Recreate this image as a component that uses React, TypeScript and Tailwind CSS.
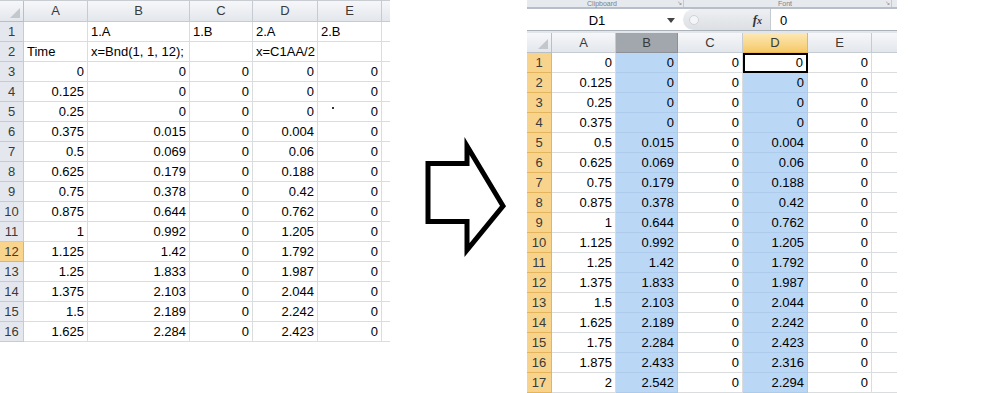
import React from 'react';
import clsx from 'clsx';

const leftCols = ['w-[24px]', 'w-[64px]', 'w-[102px]', 'w-[63px]', 'w-[65px]', 'w-[64px]', 'w-[8px]'];
const rightCols = ['w-[25px]', 'w-[64px]', 'w-[62px]', 'w-[65px]', 'w-[65px]', 'w-[64px]', 'w-[25px]'];
const letters = ['A', 'B', 'C', 'D', 'E'];

const leftRows: string[][] = [
  ['', '1.A', '1.B', '2.A', '2.B'],
  ['Time', 'x=Bnd(1, 1, 12);', '', 'x=C1AA/2', ''],
  ['0', '0', '0', '0', '0'],
  ['0.125', '0', '0', '0', '0'],
  ['0.25', '0', '0', '0', '0'],
  ['0.375', '0.015', '0', '0.004', '0'],
  ['0.5', '0.069', '0', '0.06', '0'],
  ['0.625', '0.179', '0', '0.188', '0'],
  ['0.75', '0.378', '0', '0.42', '0'],
  ['0.875', '0.644', '0', '0.762', '0'],
  ['1', '0.992', '0', '1.205', '0'],
  ['1.125', '1.42', '0', '1.792', '0'],
  ['1.25', '1.833', '0', '1.987', '0'],
  ['1.375', '2.103', '0', '2.044', '0'],
  ['1.5', '2.189', '0', '2.242', '0'],
  ['1.625', '2.284', '0', '2.423', '0'],
];

const rightRows: string[][] = [
  ['0', '0', '0', '0', '0'],
  ['0.125', '0', '0', '0', '0'],
  ['0.25', '0', '0', '0', '0'],
  ['0.375', '0', '0', '0', '0'],
  ['0.5', '0.015', '0', '0.004', '0'],
  ['0.625', '0.069', '0', '0.06', '0'],
  ['0.75', '0.179', '0', '0.188', '0'],
  ['0.875', '0.378', '0', '0.42', '0'],
  ['1', '0.644', '0', '0.762', '0'],
  ['1.125', '0.992', '0', '1.205', '0'],
  ['1.25', '1.42', '0', '1.792', '0'],
  ['1.375', '1.833', '0', '1.987', '0'],
  ['1.5', '2.103', '0', '2.044', '0'],
  ['1.625', '2.189', '0', '2.242', '0'],
  ['1.75', '2.284', '0', '2.423', '0'],
  ['1.875', '2.433', '0', '2.316', '0'],
  ['2', '2.542', '0', '2.294', '0'],
];

const isNum = (v: string) => v !== '' && !isNaN(Number(v));

const Corner = ({ w }: { w: string }) => (
  <div className={clsx(w, 'relative shrink-0 border-r border-b border-[#b9bfc7]')}>
    <svg className="absolute right-[3px] bottom-[3px]" width="10" height="10" viewBox="0 0 10 10">
      <polygon points="10,0 10,10 0,10" fill="#c3c8ce" />
    </svg>
  </div>
);

const LeftSheet = () => (
  <div className="w-[390px] shrink-0 flex flex-col">
    <div className="flex h-[22px] border-t border-[#c9cdd2] bg-linear-to-b from-[#f6f7f9] to-[#e2e6eb] text-[#3a3a3a]">
      <Corner w={leftCols[0]} />
      {letters.map((l, i) => (
        <div key={l} className={clsx(leftCols[i + 1], 'shrink-0 flex items-center justify-center border-r border-b border-[#c5cbd2]')}>{l}</div>
      ))}
      <div className={clsx(leftCols[6], 'shrink-0 border-b border-[#c5cbd2]')} />
    </div>
    {leftRows.map((row, r) => (
      <div key={r} className="flex h-[20px]">
        <div className={clsx(leftCols[0], 'shrink-0 flex items-center justify-center border-r border-b text-[#3a3a3a]', r === 11 ? 'bg-[#f8d48c] border-[#e2b45c]' : 'bg-[#e4e8ee] border-[#c5cbd2]')}>{r + 1}</div>
        {row.map((v, c) => (
          <div key={c} className={clsx(leftCols[c + 1], 'relative shrink-0 flex items-center px-[3px] border-r border-b border-[#dadcdd] whitespace-nowrap', isNum(v) ? 'justify-end' : 'justify-start')}>
            {v}
            {r === 4 && c === 4 && <span className="absolute left-[14px] top-[5px] w-[2px] h-[2px] bg-[#333]" />}
          </div>
        ))}
        <div className={clsx(leftCols[6], 'shrink-0 border-b border-[#dadcdd]')} />
      </div>
    ))}
  </div>
);

const Arrow = () => (
  <div className="w-[137px] shrink-0">
    <svg width="137" height="393" viewBox="0 0 137 393">
      <polygon points="38,163.5 77,163.5 77,146 113,206 77,250 77,221.5 38,221.5" fill="white" stroke="black" strokeWidth="5" strokeLinejoin="miter" />
    </svg>
  </div>
);

const RightSheet = () => (
  <div className="w-[370px] shrink-0 flex flex-col">
    {/* ribbon remnant */}
    <div className="flex h-[9px] bg-[#e6eaef] border-b-2 border-[#b7bec7] text-[7px] leading-[7px] text-[#7a8088]">
      <div className="w-[150px] shrink-0 text-center">Clipboard</div>
      <div className="w-[6px] shrink-0 text-[6px] leading-[7px]">↘</div>
      <div className="w-[2px] shrink-0 border-l border-[#c4cad1]" />
      <div className="w-[200px] shrink-0 text-center">Font</div>
      <div className="w-[6px] shrink-0 text-[6px] leading-[7px]">↘</div>
      <div className="w-[2px] shrink-0 border-l border-[#c4cad1]" />
    </div>
    {/* formula bar */}
    <div className="flex h-[21px] items-center bg-white">
      <div className="w-[156px] shrink-0 flex items-center pt-[2px]">
        <div className="w-[140px] text-center">D1</div>
        <svg width="8" height="5" viewBox="0 0 8 5"><polygon points="0,0 8,0 4,5" fill="#444" /></svg>
      </div>
      <div className="w-[87px] h-[21px] shrink-0 flex items-center justify-between rounded-l-full bg-linear-to-b from-[#eef0f3] to-[#dcdfe3] pl-[6px] pr-[8px]">
        <span className="w-[10px] h-[10px] rounded-full bg-[#f4f5f7] border border-[#cfd3d8]" />
        <span className="font-['Liberation_Serif',serif] italic font-bold text-[13px] text-[#333]">f<span className="text-[10px]">x</span></span>
      </div>
      <div className="h-[21px] border-l border-[#c5cad1] pl-[9px] pt-[2px] flex items-center">0</div>
    </div>
    <div className="h-[3px] border-t border-[#aab1b9] bg-[#e2e6eb]" />
    {/* header */}
    <div className="flex h-[22px] bg-linear-to-b from-[#f6f7f9] to-[#e2e6eb] text-[#3a3a3a]">
      <Corner w={rightCols[0]} />
      {letters.map((l, i) => (
        <div
          key={l}
          className={clsx(
            rightCols[i + 1],
            'shrink-0 flex items-center justify-center border-r border-b',
            i === 1 && 'bg-[#a2a7ad] border-[#8c9197]',
            i === 3 && 'bg-linear-to-b from-[#fde8b4] to-[#f5c967] border-[#eab64f]',
            i !== 1 && i !== 3 && 'border-[#c5cbd2]'
          )}
        >
          {l}
        </div>
      ))}
      <div className={clsx(rightCols[6], 'shrink-0 border-b border-[#c5cbd2]')} />
    </div>
    {rightRows.map((row, r) => (
      <div key={r} className="flex h-[20px] shrink-0">
        <div className={clsx(rightCols[0], 'shrink-0 flex items-center justify-center border-r border-b bg-[#f8d38b] border-[#e4b55c] text-[#3a3a3a]')}>{r + 1}</div>
        {row.map((v, c) => {
          const active = r === 0 && c === 3;
          const blue = c === 1 || (c === 3 && !active);
          return (
            <div
              key={c}
              className={clsx(
                rightCols[c + 1],
                'shrink-0 flex items-center justify-end px-[3px] whitespace-nowrap',
                active ? 'border-2 border-black' : 'border-r border-b',
                blue ? 'bg-[#bad7f6] border-[#aecbeb]' : !active && 'border-[#dadcdd]'
              )}
            >
              {v}
            </div>
          );
        })}
        <div className={clsx(rightCols[6], 'shrink-0 border-b border-[#dadcdd]')} />
      </div>
    ))}
  </div>
);

export default function App() {
  return (
    <div className="flex w-[1000px] h-[393px] overflow-hidden bg-white text-black text-[13px] font-['Liberation_Sans',Arial,sans-serif]">
      <LeftSheet />
      <Arrow />
      <RightSheet />
    </div>
  );
}
